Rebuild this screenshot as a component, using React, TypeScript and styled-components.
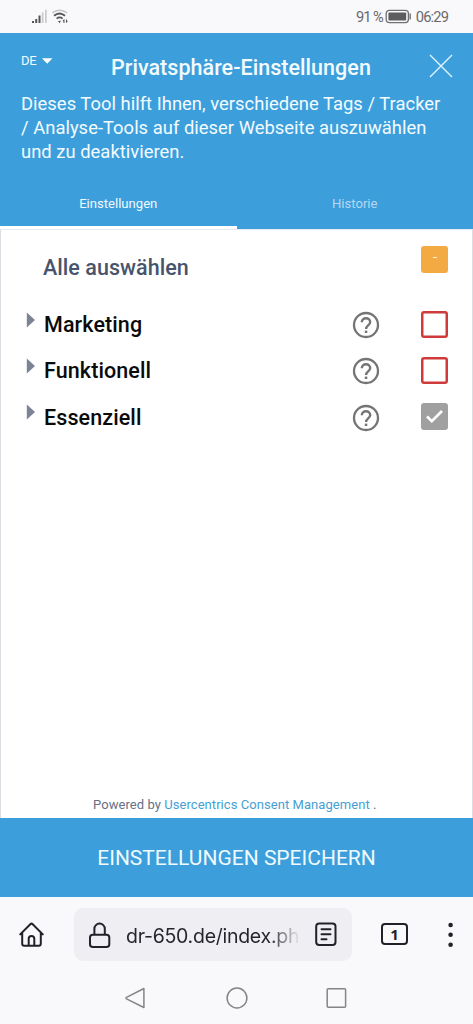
import React from "react";
import styled, { createGlobalStyle } from "styled-components";

const BLUE = "#3c9fdc";

const GlobalStyle = createGlobalStyle`
  * { box-sizing: border-box; }
  body { margin: 0; background: #f9f9fc; font-family: Roboto, "Liberation Sans", sans-serif; }
  button { font: inherit; border: 0; padding: 0; margin: 0; background: none; }
  svg { display: block; flex: none; }
`;

const Screen = styled.div`
  width: 473px;
  height: 1024px;
  display: flex;
  flex-direction: column;
  overflow: hidden;
`;

const StatusBar = styled.div`
  height: 33px;
  flex: none;
  display: flex;
  align-items: flex-start;
  padding: 9px 24px 0 31px;
  background: #f9f9fc;
  color: #69696b;
`;

const Signals = styled.div`
  flex: 1;
  display: flex;
  gap: 4px;
`;

const StatusText = styled.span<{ $width: number; $spacing: number }>`
  width: ${(p) => p.$width}px;
  font-size: 14.7px;
  line-height: 16px;
  letter-spacing: ${(p) => p.$spacing}px;
  white-space: nowrap;
`;

const Header = styled.header`
  height: 196px;
  flex: none;
  display: flex;
  flex-direction: column;
  background: ${BLUE};
  color: #f3fbff;
`;

const TitleRow = styled.div`
  height: 59px;
  display: flex;
  align-items: flex-start;
  padding: 0 20px 0 21px;
`;

const Language = styled.button`
  width: 90px;
  padding-top: 19px;
  display: flex;
  align-items: center;
  gap: 5px;
  color: inherit;
  font-size: 13px;
  letter-spacing: -0.3px;
  line-height: 17px;
`;

const Title = styled.h1`
  flex: 1;
  margin: 0;
  padding-top: 22px;
  font-size: 21.5px;
  font-weight: 500;
  line-height: 26px;
  letter-spacing: 0.04px;
  white-space: nowrap;
`;

const CloseButton = styled.button`
  padding-top: 21px;
`;

const Description = styled.p`
  margin: 0;
  padding-left: 21px;
  height: 74px;
  font-size: 18.4px;
  line-height: 24px;
  letter-spacing: 0.02px;
  white-space: nowrap;
`;

const Line = styled.span`
  display: block;
`;

const Tabs = styled.div`
  flex: 1;
  display: flex;
`;

const Tab = styled.button<{ $active?: boolean }>`
  flex: 1;
  color: ${(p) => (p.$active ? "#f0f9fe" : "#b5d8f0")};
  font-size: 13.1px;
  line-height: 16px;
  padding-top: ${(p) => (p.$active ? 16 : 13)}px;
  border-bottom: ${(p) => (p.$active ? "3px solid #fff" : "0")};
`;

const Content = styled.main`
  flex: 1;
  display: flex;
  flex-direction: column;
  background: #fff;
  border: 1px solid #dcdde2;
  border-top-color: #e3eaf3;
  border-bottom: 0;
  padding-top: 16px;
`;

const Row = styled.div<{ $height: number }>`
  height: ${(p) => p.$height}px;
  display: flex;
  align-items: flex-start;
  padding: 0 24px 0 25px;
`;

const SelectAllLabel = styled.span`
  flex: 1;
  padding: 9px 0 0 17px;
  color: #47546b;
  font-size: 21.5px;
  font-weight: 500;
  line-height: 26px;
  letter-spacing: 0.05px;
`;

const Expander = styled.span`
  width: 18px;
  padding-top: 1.5px;
`;

const CategoryName = styled.span`
  flex: 1;
  padding-top: 2px;
  color: #0b0b0b;
  font-size: 21.5px;
  font-weight: 500;
  line-height: 26px;
  letter-spacing: 0.1px;
`;

const HelpSlot = styled.span`
  width: 69px;
  padding-top: 1px;
`;

const Checkbox = styled.span<{ $kind: "mixed" | "empty" | "locked" }>`
  width: 27px;
  height: 27px;
  margin-top: ${(p) => (p.$kind === "mixed" ? 0 : 0.5)}px;
  display: flex;
  align-items: center;
  justify-content: center;
  border-radius: 3px;
  background: ${(p) =>
    p.$kind === "mixed" ? "#f4aa42" : p.$kind === "locked" ? "#a0a0a0" : "#fff"};
  box-shadow: ${(p) => (p.$kind === "empty" ? "inset 0 0 0 2.5px #cf3a3b" : "none")};
`;

const MixedMark = styled.span`
  width: 4px;
  height: 1px;
  margin-bottom: 4px;
  background: #fff3dd;
`;

const Powered = styled.footer`
  margin-top: auto;
  padding: 0 0 4px 92px;
  color: #667087;
  font-size: 13px;
  line-height: 18px;
  letter-spacing: 0.06px;
  white-space: nowrap;
`;

const PoweredLink = styled.span`
  color: #459fd3;
`;

const SaveButton = styled.button`
  height: 79px;
  flex: none;
  background: ${BLUE};
  color: #effaff;
  font-size: 21px;
`;

const BrowserBar = styled.div`
  height: 74px;
  flex: none;
  display: flex;
  align-items: flex-start;
  padding: 11px 0 0 18px;
  color: #222129;
`;

const HomeButton = styled.button`
  width: 56px;
  flex: none;
  padding-top: 13px;
  color: inherit;
`;

const AddressBar = styled.div`
  width: 278px;
  height: 53px;
  flex: none;
  display: flex;
  align-items: center;
  padding: 0 15px 0 14px;
  border-radius: 9px;
  background: #efeef3;
`;

const Url = styled.span`
  flex: 1;
  margin: 2px 12px 0 15px;
  font-family: Inter, "Liberation Sans", sans-serif;
  font-size: 19.5px;
  line-height: 26px;
  letter-spacing: -0.27px;
  white-space: nowrap;
  color: transparent;
  background: linear-gradient(90deg, #25242b 143px, #e6e6ea 173px);
  background-clip: text;
`;

const TabCount = styled.button`
  width: 27px;
  height: 22px;
  flex: none;
  margin: 15px 0 0 29px;
  border: 2px solid #222129;
  border-radius: 4px;
  color: #222129;
  font-family: "Noto Sans", sans-serif;
  font-size: 15px;
  font-weight: 700;
  line-height: 18px;
`;

const MenuButton = styled.button`
  margin: 14px 0 0 39.5px;
  color: inherit;
`;

const SystemNav = styled.nav`
  height: 53px;
  flex: none;
  display: flex;
  align-items: flex-start;
  padding: 16px 0 0 125px;
  gap: 78.5px;
  color: #858587;
`;

const HelpIcon = () => (
  <svg width="28" height="28" viewBox="0 0 28 28" fill="none" stroke="#747474">
    <circle cx="14" cy="14" r="12" strokeWidth="2.3" />
    <path
      d="M9.8 11.2c0-2.4 1.8-4 4.2-4s4.2 1.7 4.2 3.9c0 3.3-4.1 3.4-4.1 6.8"
      strokeWidth="2.4"
    />
    <path d="M12.8 20.8h2.5" strokeWidth="2.4" />
  </svg>
);

const categories: { name: string; locked: boolean }[] = [
  { name: "Marketing", locked: false },
  { name: "Funktionell", locked: false },
  { name: "Essenziell", locked: true },
];

export default function App() {
  return (
    <Screen>
      <GlobalStyle />
      <StatusBar>
        <Signals>
          <svg width="17" height="15" viewBox="0 0 17 15">
            <path d="M1 12h2v2H1zM4.2 10h2v4h-2zM7.5 6.5h2V14h-2z" fill="#555557" />
            <path d="M10.8 3.5h1.7V14h-1.7zM14 .8h1.7V14H14z" fill="#cacacc" />
          </svg>
          <svg width="17" height="15" viewBox="0 0 17 15" fill="none">
            <path d="M.4 4C4.6.3 10.6.3 15.1 4" stroke="#c3c3c5" strokeWidth="1.5" />
            <path d="M2 6.8c3.4-2.9 7.6-2.9 11 0M4.6 9.6c2-1.6 4-1.6 6 0" stroke="#555557" strokeWidth="1.8" />
            <path d="m6 11.9 3-.2-1.5 2.5zM12 10.3l-1.7 2h1.2v1.7h1v-3.7zM14 14v-3.6h1v1.8h1.2z" fill="#555557" />
          </svg>
        </Signals>
        <StatusText $width={29} $spacing={-1.05}>91 %</StatusText>
        <svg width="28" height="15" viewBox="0 0 28 15" fill="none">
          <rect x="1.2" y="1.3" width="22.2" height="12.3" rx="3" stroke="#707072" strokeWidth="1.3" />
          <rect x="3.4" y="3.4" width="17.8" height="8.2" rx="1" fill="#5d5d5f" />
          <path d="M25.2 4.5v6" stroke="#707072" strokeWidth="1.4" />
        </svg>
        <StatusText $width={36} $spacing={-0.85}>&nbsp;06:29</StatusText>
      </StatusBar>

      <Header>
        <TitleRow>
          <Language>
            DE
            <svg width="12" height="6" viewBox="-1 0 12 6"><path d="M0 .3h10.5L5.2 5.7z" fill="#fff" /></svg>
          </Language>
          <Title>Privatsphäre-Einstellungen</Title>
          <CloseButton aria-label="Schließen">
            <svg width="24" height="24" viewBox="0 0 24 24" stroke="#e6f7ff" strokeWidth="1.3">
              <path d="m1 1 22 22M23 1 1 23" />
            </svg>
          </CloseButton>
        </TitleRow>
        <Description>
          <Line>Dieses Tool hilft Ihnen, verschiedene Tags / Tracker</Line>
          <Line>/ Analyse-Tools auf dieser Webseite auszuwählen</Line>
          <Line>und zu deaktivieren.</Line>
        </Description>
        <Tabs>
          <Tab $active>Einstellungen</Tab>
          <Tab>Historie</Tab>
        </Tabs>
      </Header>

      <Content>
        <Row $height={64}>
          <SelectAllLabel>Alle auswählen</SelectAllLabel>
          <Checkbox $kind="mixed"><MixedMark /></Checkbox>
        </Row>
        {categories.map((c) => (
          <Row key={c.name} $height={46.4}>
            <Expander>
              <svg width="9" height="16" viewBox="0 0 9 16"><path d="M.8.5 9 8 .8 15.5z" fill="#7b8495" /></svg>
            </Expander>
            <CategoryName>{c.name}</CategoryName>
            <HelpSlot><HelpIcon /></HelpSlot>
            <Checkbox $kind={c.locked ? "locked" : "empty"}>
              {c.locked && (
                <svg width="19" height="15" viewBox="0 0 19 15" fill="none" stroke="#fff" strokeWidth="2.6">
                  <path d="m2 7.5 4.8 4.7L17 2" />
                </svg>
              )}
            </Checkbox>
          </Row>
        ))}
        <Powered>
          Powered by <PoweredLink>Usercentrics Consent Management</PoweredLink> .
        </Powered>
      </Content>

      <SaveButton>EINSTELLUNGEN SPEICHERN</SaveButton>

      <BrowserBar>
        <HomeButton aria-label="Startseite">
          <svg width="27" height="27" viewBox="0 0 27 27" fill="none" stroke="currentColor" strokeWidth="2" strokeLinecap="round" strokeLinejoin="round">
            <path d="M2.2 13.4 12.3 3.2q1.2-1.2 2.4 0l10.1 10.2M4.2 11.8v10.9q0 2 2 2h14.6q2 0 2-2V11.8M10.7 24.5v-6.7a2.8 2.8 0 0 1 5.6 0V24.5" />
          </svg>
        </HomeButton>
        <AddressBar>
          <svg width="23" height="28" viewBox="0 0 23 28" fill="none" stroke="currentColor" strokeWidth="2">
            <rect x="2" y="13.7" width="19.3" height="12.3" rx="2.8" />
            <path d="M6.4 13.5V7.8a5.2 5.2 0 0 1 10.4 0v5.7" />
          </svg>
          <Url>dr-650.de/index.ph</Url>
          <svg width="22" height="25" viewBox="0 0 22 25" fill="none" stroke="currentColor" strokeWidth="2" strokeLinecap="round">
            <rect x="1.2" y="1.5" width="19.3" height="21.5" rx="3" />
            <path d="M6.5 7.2h9M6.5 12.2h9M6.5 17.2h5" />
          </svg>
        </AddressBar>
        <TabCount>1</TabCount>
        <MenuButton aria-label="Menü">
          <svg width="30" height="26" viewBox="0 0 30 26" fill="currentColor">
            <circle cx="2.6" cy="3" r="2.3" /><circle cx="2.6" cy="12.8" r="2.3" /><circle cx="2.6" cy="22.7" r="2.3" />
          </svg>
        </MenuButton>
      </BrowserBar>

      <SystemNav>
        <svg width="22" height="22" viewBox="0 0 22 22" fill="none" stroke="currentColor" strokeWidth="1.5" strokeLinejoin="round">
          <path d="M18.9 1.5v19L1.5 11.8q-1-.7 0-1.4z" />
        </svg>
        <svg width="22" height="22" viewBox="0 0 22 22" fill="none" stroke="currentColor" strokeWidth="1.5">
          <circle cx="11" cy="11" r="9.9" />
        </svg>
        <svg width="22" height="22" viewBox="0 0 22 22" fill="none" stroke="currentColor" strokeWidth="1.5">
          <rect x="1.2" y="1.8" width="18.4" height="18.4" rx="1" />
        </svg>
      </SystemNav>
    </Screen>
  );
}
